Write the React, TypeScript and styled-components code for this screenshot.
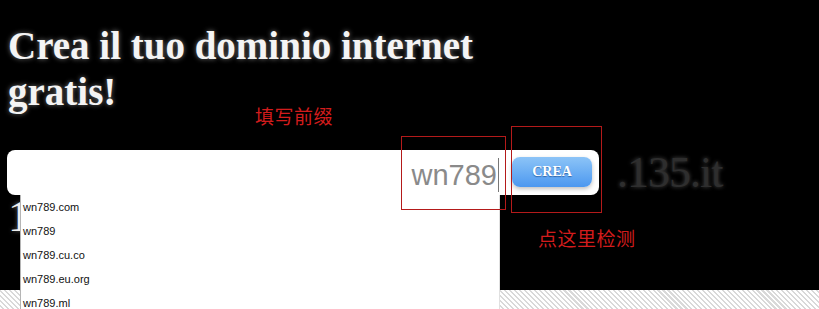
import * as React from "react";
import styled, { createGlobalStyle } from "styled-components";

const suggestions = [
  "wn789.com",
  "wn789",
  "wn789.cu.co",
  "wn789.eu.org",
  "wn789.ml",
];

const App = () => {
  const [query] = React.useState("wn789");

  return (
    <>
      <GlobalStyle />
      <Page>
        <Title>
          Crea il tuo dominio internet
          <br />
          gratis!
        </Title>

        <FormRow>
          <InputBox>
            <InputArea>
              <Typed>{query}</Typed>
              <Caret />
            </InputArea>
            <CreaButton>CREA</CreaButton>
          </InputBox>
          <Suffix>.135.it</Suffix>
        </FormRow>

        <Counter>1</Counter>

        {/* autocomplete list lies over the content below the input */}
        <Dropdown>
          {suggestions.map((s) => (
            <Item key={s}>{s}</Item>
          ))}
        </Dropdown>

        {/* red annotation marks drawn over the screenshot */}
        <Note $x={255} $y={105}>填写前缀</Note>
        <Note $x={538} $y={227}>点这里检测</Note>
        <Mark $x={401} $y={136} $w={105} $h={74} />
        <Mark $x={511} $y={126} $w={91} $h={87} />
      </Page>
    </>
  );
};

export default App;

const GlobalStyle = createGlobalStyle`
  html, body {
    margin: 0;
    padding: 0;
  }
  body {
    width: 819px;
    height: 309px;
    overflow: hidden;
    background: repeating-linear-gradient(
      45deg,
      #ffffff 0px,
      #ffffff 2px,
      #d9d9d9 2px,
      #d9d9d9 3.5px
    );
    font-family: "Liberation Serif", "Times New Roman", serif;
  }
`;

const Page = styled.div`
  position: relative;
  height: 290px;
  background: #000;
  padding: 23px 8px 0;
  box-sizing: border-box;
`;

const Title = styled.h1`
  margin: 0;
  font-family: "Liberation Serif", "Times New Roman", serif;
  font-size: 39px;
  line-height: 46px;
  font-weight: bold;
  color: #f4f4f4;
  text-shadow: 0 0 5px rgba(255, 255, 255, 0.45);
`;

const FormRow = styled.div`
  display: flex;
  align-items: center;
  margin-top: 32px;
  margin-left: -1px;
`;

const InputBox = styled.div`
  display: flex;
  align-items: center;
  width: 592px;
  height: 45px;
  background: #fff;
  border-radius: 8px;
`;

const InputArea = styled.div`
  flex: 1;
  display: flex;
  justify-content: flex-end;
  align-items: center;
  height: 100%;
`;

const Typed = styled.span`
  font-family: "Liberation Sans", Arial, sans-serif;
  font-size: 29px;
  line-height: 32px;
  color: #8a8a8a;
  padding-top: 5px;
`;

const Caret = styled.span`
  width: 1px;
  height: 34px;
  margin-left: 1px;
  margin-top: 4px;
  background: #777;
`;

const CreaButton = styled.button`
  width: 80px;
  height: 30px;
  margin: 0 7px 1px 13px;
  padding: 0;
  border: 0;
  border-radius: 8px;
  background: linear-gradient(#8cc4f7, #4c98f0);
  box-shadow: 0 2px 4px rgba(0, 0, 0, 0.25);
  font-family: "Liberation Serif", "Times New Roman", serif;
  font-weight: bold;
  font-size: 14px;
  color: #fff;
  text-shadow: 0 1px 1px rgba(20, 60, 120, 0.6);
  cursor: pointer;
`;

const Suffix = styled.span`
  margin-left: 18px;
  font-family: "Liberation Serif", "Times New Roman", serif;
  font-size: 44px;
  letter-spacing: -1px;
  color: #2e2e2e;
  text-shadow: 0 0 4px rgba(120, 120, 120, 0.6);
`;

const Counter = styled.div`
  font-family: "Liberation Serif", "Times New Roman", serif;
  font-size: 44px;
  line-height: 44px;
  color: #eee;
  text-shadow: 0 0 4px rgba(255, 255, 255, 0.4);
  margin-top: -3px;
`;

const Dropdown = styled.ul`
  position: absolute;
  left: 20px;
  top: 195px;
  width: 480px;
  margin: 0;
  padding: 0;
  list-style: none;
  background: #fff;
  border-left: 1px solid #b5b5b5;
  border-right: 1px solid #e0e0e0;
  box-sizing: border-box;
`;

const Item = styled.li`
  height: 24px;
  line-height: 24px;
  padding-left: 2px;
  font-family: "Liberation Sans", Tahoma, sans-serif;
  font-size: 11px;
  color: #111;
`;

const Note = styled.span<{ $x: number; $y: number }>`
  position: absolute;
  left: ${(p) => p.$x}px;
  top: ${(p) => p.$y}px;
  font-family: "Noto Sans CJK SC", sans-serif;
  font-size: 19px;
  line-height: 22px;
  letter-spacing: 0.5px;
  color: #d21c1c;
`;

const Mark = styled.div<{ $x: number; $y: number; $w: number; $h: number }>`
  position: absolute;
  left: ${(p) => p.$x}px;
  top: ${(p) => p.$y}px;
  width: ${(p) => p.$w}px;
  height: ${(p) => p.$h}px;
  border: 1px solid #b41a1a;
  box-sizing: border-box;
`;
